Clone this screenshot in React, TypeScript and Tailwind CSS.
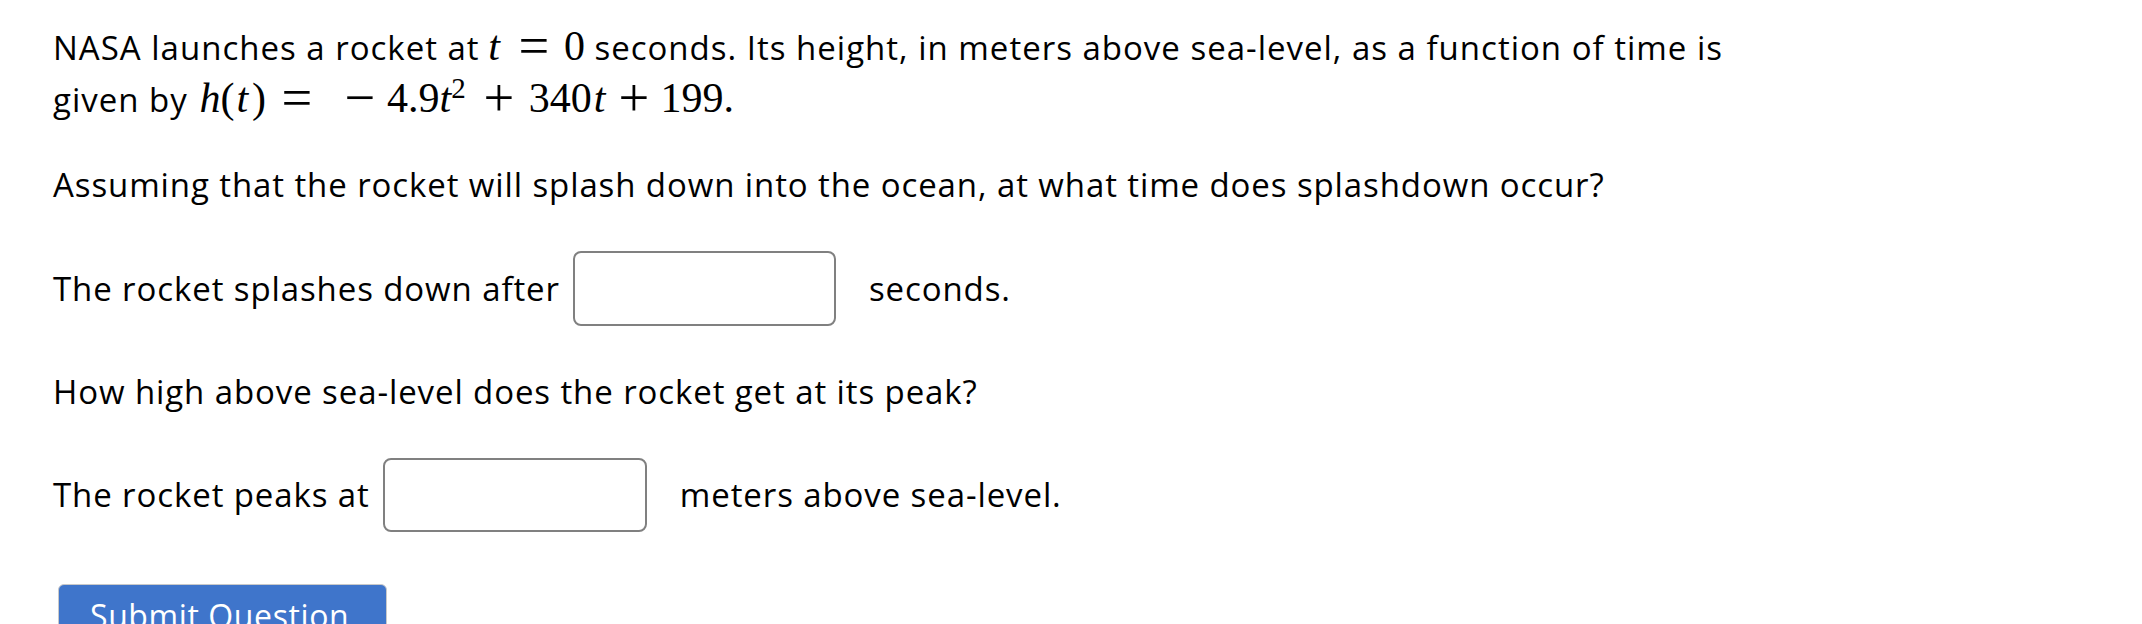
import React from 'react';

// math glyphs: letters/digits in a Times-like serif
const M = ({ children, className = '' }: { children: React.ReactNode; className?: string }) => (
    <span className={`font-['Liberation_Serif',serif] text-[42px] tracking-normal ${className}`}>{children}</span>
);
// operators sit in a fixed 30px box so spacing follows the reference
const Op = ({ children, className = '' }: { children: React.ReactNode; className?: string }) => (
    <span className={`inline-block w-[30px] text-center font-['Liberation_Serif',serif] text-[42px] tracking-normal scale-[1.3] ${className}`}>{children}</span>
);

export default function App() {
    return (
        <div className="min-h-screen bg-white text-black font-['Open_Sans',sans-serif] text-[33px] tracking-[0.9px] pl-[53px] pt-[21px]">
            {/* problem statement */}
            <p className="leading-[50px] tracking-[1px]">
                NASA launches a rocket at <M className="italic -ml-[1px]">t</M>
                <Op className="ml-[19px]">=</Op>
                <M className="ml-[15px]">0</M> seconds. Its height, in meters above sea-level, as a function of time is
                <br />
                given by <M className="italic ml-[2px]">h</M>
                <M>(</M>
                <M className="italic ml-[2px]">t</M>
                <M className="ml-[4px]">)</M>
                <Op className="ml-[16px]">=</Op>
                <Op className="ml-[33px]">−</Op>
                <M className="ml-[12px]">4.9</M>
                <M className="italic">t</M>
                <sup className="font-['Liberation_Serif',serif] text-[29px] tracking-normal">2</sup>
                <Op className="ml-[18px]">+</Op>
                <M className="ml-[15px]">340</M>
                <M className="italic ml-[2px]">t</M>
                <Op className="ml-[14px]">+</Op>
                <M className="ml-[11px]">199.</M>
            </p>

            <p className="leading-[50px] mt-[35px]">
                Assuming that the rocket will splash down into the ocean, at what time does splashdown occur?
            </p>

            <div className="flex items-center mt-[41px]">
                <span>The rocket splashes down after</span>
                <input type="text" className="ml-[13px] w-[263px] h-[75px] border-2 border-[#808080] rounded-lg bg-white" />
                <span className="ml-[33px]">seconds.</span>
            </div>

            <p className="leading-[50px] mt-[41px]">How high above sea-level does the rocket get at its peak?</p>

            <div className="flex items-center mt-[41px]">
                <span>The rocket peaks at</span>
                <input type="text" className="ml-[13px] w-[264px] h-[74px] border-2 border-[#808080] rounded-lg bg-white" />
                <span className="ml-[33px]">meters above sea-level.</span>
            </div>

            <button className="mt-[52px] ml-[5px] w-[329px] h-[64px] bg-[#3f75cb] border border-[#c9c9c9] rounded-md text-white text-[32px] tracking-[0.6px] text-left pl-[31px] leading-[50px]">
                Submit Question
            </button>
        </div>
    );
}
